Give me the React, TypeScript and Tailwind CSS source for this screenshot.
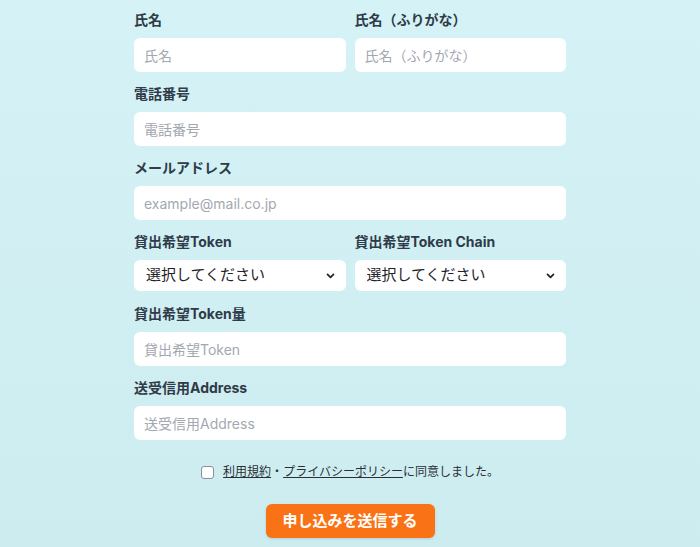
import React from "react";

const font = { fontFamily: 'Inter, "Noto Sans CJK JP", sans-serif' };

function Label({ children }: { children: React.ReactNode }) {
  return <div className="h-5 text-[14px] leading-5 font-bold text-[#2f3b48] mb-2 whitespace-nowrap">{children}</div>;
}

function Input({ placeholder }: { placeholder: string }) {
  return (
    <input
      className="block w-full h-[34px] rounded-md bg-white px-[10px] text-[14px] text-[#1f2937] placeholder:text-[#a3a8b0] outline-none"
      placeholder={placeholder}
    />
  );
}

function Select() {
  return (
    <div className="relative mt-[1px]">
      <select className="block w-full h-[31px] appearance-none rounded-md bg-white pl-[12px] pr-8 text-[15px] text-[#1f2329] outline-none">
        <option>選択してください</option>
      </select>
      <svg
        className="pointer-events-none absolute right-[11px] top-1/2 -translate-y-1/2"
        width="9"
        height="6"
        viewBox="0 0 10 7"
        fill="none"
      >
        <path d="M1.5 1.5L5 5L8.5 1.5" stroke="#1f2329" strokeWidth="2" strokeLinecap="round" strokeLinejoin="round" />
      </svg>
    </div>
  );
}

export default function App() {
  return (
    <div className="min-h-[547px] w-full bg-gradient-to-b from-[#d5f3f7] to-[#cdecf0]" style={font}>
      <div className="mx-auto w-[432px] pt-[10px] pb-[10px] flex flex-col gap-[12px]">
        <div className="grid grid-cols-2 gap-[9px]">
          <div>
            <Label>氏名</Label>
            <Input placeholder="氏名" />
          </div>
          <div>
            <Label>氏名（ふりがな）</Label>
            <Input placeholder="氏名（ふりがな）" />
          </div>
        </div>
        <div>
          <Label>電話番号</Label>
          <Input placeholder="電話番号" />
        </div>
        <div>
          <Label>メールアドレス</Label>
          <Input placeholder="example@mail.co.jp" />
        </div>
        <div className="grid grid-cols-2 gap-[9px]">
          <div>
            <Label>貸出希望Token</Label>
            <Select />
          </div>
          <div>
            <Label>貸出希望Token Chain</Label>
            <Select />
          </div>
        </div>
        <div className="mt-[1px]">
          <Label>貸出希望Token量</Label>
          <Input placeholder="貸出希望Token" />
        </div>
        <div>
          <Label>送受信用Address</Label>
          <Input placeholder="送受信用Address" />
        </div>
        <div className="mt-[12px] flex items-center justify-center gap-[9px] h-4">
          <span className="block w-[13px] h-[13px] rounded-[3px] border border-[#8a8f96] bg-white" />
          <span className="text-[12px] leading-4 text-[#2a2f35] whitespace-nowrap">
            <span className="underline">利用規約</span>・<span className="underline">プライバシーポリシー</span>に同意しました。
          </span>
        </div>
        <div className="mt-[12px] flex justify-center">
          <button className="w-[169px] h-[34px] rounded-md bg-[#f97316] text-white text-[15px] font-bold shadow-sm">
            申し込みを送信する
          </button>
        </div>
      </div>
    </div>
  );
}
